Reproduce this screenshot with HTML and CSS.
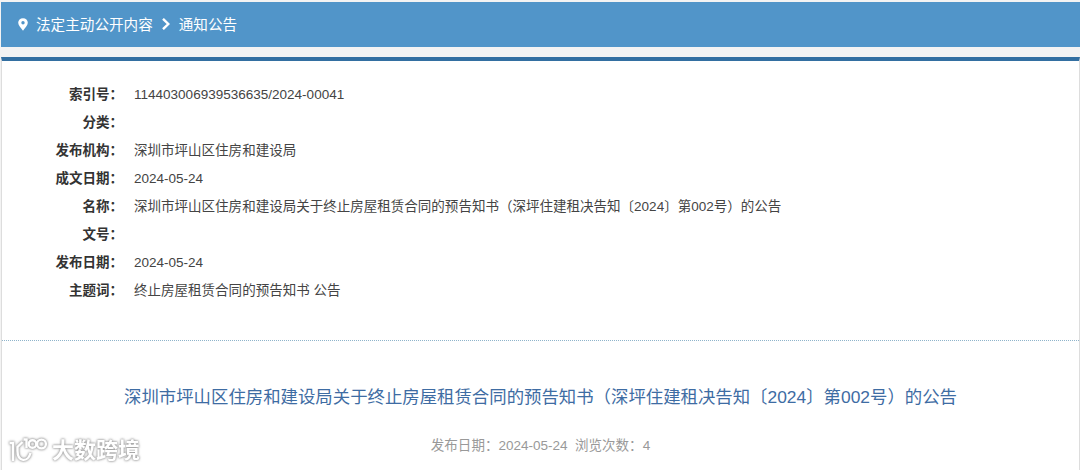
FILE: index.html
```html
<!DOCTYPE html>
<html lang="zh-CN">
    <head>
        <meta charset="UTF-8">
        <title>通知公告</title>
        <link rel="stylesheet" href="styles.css">
    </head>
    <body>
        <div class="crumbs">
            <svg class="pin" viewBox="0 0 10 13" width="10" height="13">
                <path fill="#fff" fill-rule="evenodd" d="M5 0.2C2.2 0.2 0.2 2.2 0.2 4.8C0.2 7.6 3.2 10 5 12.8C6.8 10 9.8 7.6 9.8 4.8C9.8 2.2 7.8 0.2 5 0.2ZM5 3A1.7 1.7 0 1 1 5 6.4A1.7 1.7 0 1 1 5 3Z"/>
            </svg>
            <span>法定主动公开内容</span>
            <svg class="arrow" viewBox="0 0 8 12" width="8" height="12">
                <path fill="none" stroke="#fff" stroke-width="2.4" d="M1 0.8L6.3 6L1 11.2"/>
            </svg>
            <span>通知公告</span>
        </div>
        <div class="content">
            <dl class="info">
                <dt>索引号：</dt><dd>114403006939536635/2024-00041</dd>
                <dt>分类：</dt><dd></dd>
                <dt>发布机构：</dt><dd>深圳市坪山区住房和建设局</dd>
                <dt>成文日期：</dt><dd>2024-05-24</dd>
                <dt>名称：</dt><dd>深圳市坪山区住房和建设局关于终止房屋租赁合同的预告知书（深坪住建租决告知〔2024〕第002号）的公告</dd>
                <dt>文号：</dt><dd></dd>
                <dt>发布日期：</dt><dd>2024-05-24</dd>
                <dt>主题词：</dt><dd>终止房屋租赁合同的预告知书 公告</dd>
            </dl>
            <h1>深圳市坪山区住房和建设局关于终止房屋租赁合同的预告知书（深坪住建租决告知〔2024〕第002号）的公告</h1>
            <p class="meta">发布日期：2024-05-24&nbsp; 浏览次数：4</p>
        </div>
        <div class="watermark">
            <svg viewBox="0 0 40 28" width="40" height="28">
                <g fill="none" stroke="#fff" stroke-width="2.4">
                    <path d="M0.5 6H4V24"/>
                    <path d="M13.5 5L8.5 10V14C8.5 25 19 26 21.5 16"/>
                    <path d="M14.5 2.5H17.5V11"/>
                    <circle cx="23.5" cy="7" r="3.8"/>
                    <circle cx="32.5" cy="7" r="4.4"/>
                </g>
            </svg>
            <span>大数跨境</span>
        </div>
    </body>
</html>
```

FILE: styles.css
```css
*{
    box-sizing:border-box;
}

body{
    margin:0;
    padding-top:2px;
    height:470px;
    overflow:hidden;
    position:relative;
    background-color:#f3f3f3;
    font-family:"Liberation Sans", "Noto Sans CJK SC", sans-serif;
    font-size:13.52px;
    color:#444;
}

.crumbs{
    display:flex;
    align-items:center;
    height:45px;
    margin-left:1px;
    padding:0 0 1px 17px;
    background-color:#5195c9;
    color:#fff;
    font-size:14.6px;
}

.crumbs span{
    padding-bottom:2px;
}

.pin{
    margin-right:8px;
}

.arrow{
    margin:0 9px 0 9px;
}

.content{
    height:413px;
    margin:10px 0 0 1px;
    background-color:#fff;
    border:1px solid #ddd;
    border-top:4px solid #336fa1;
    border-bottom:none;
}

.info{
    display:grid;
    grid-template-columns:121px 1fr;
    grid-auto-rows:28px;
    column-gap:11px;
    height:280px;
    margin:0;
    padding-top:20px;
    line-height:28px;
    border-bottom:1px dotted #8fb4cb;
}

.info dt{
    text-align:right;
    font-weight:bold;
    color:#333;
}

.info dd{
    margin:0;
}

h1{
    margin:43px 0 0;
    line-height:26px;
    text-align:center;
    font-size:17.4px;
    font-weight:normal;
    color:#3e6ca3;
}

.meta{
    margin:26px 0 0;
    line-height:20px;
    text-align:center;
    color:#999;
}

/* site mark laid over the bottom left corner */
.watermark{
    position:absolute;
    left:9px;
    bottom:4px;
    display:flex;
    align-items:center;
    gap:3px;
    color:#fff;
    font-size:22px;
    font-weight:bold;
    line-height:30px;
    filter:drop-shadow(0 0 1px #999) drop-shadow(0 0 1px #bbb);
}
```
